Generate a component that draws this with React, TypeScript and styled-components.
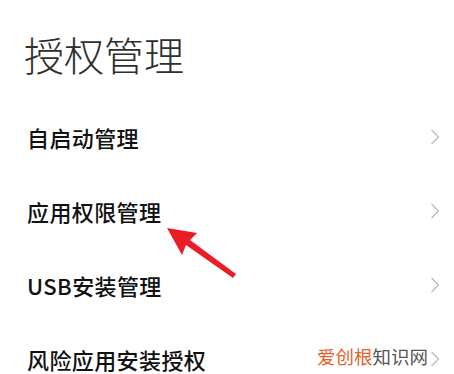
import React from "react";
import styled, { createGlobalStyle } from "styled-components";

const GlobalStyle = createGlobalStyle`
  html, body {
    margin: 0;
    padding: 0;
    background: #fff;
  }
  body {
    font-family: "Noto Sans CJK SC", "Noto Sans", sans-serif;
  }
`;

const Page = styled.div`
  position: relative;
  width: 454px;
  height: 374px;
  overflow: hidden;
  background: #fff;
`;

const Title = styled.h1`
  margin: 0;
  height: 100px;
  box-sizing: border-box;
  padding: 8px 0 0 24px;
  display: flex;
  align-items: center;
  font-size: 40px;
  font-weight: 300;
  color: #2e2e2e;
`;

const List = styled.div`
  display: flex;
  flex-direction: column;
`;

const Row = styled.div`
  height: 74px;
  display: flex;
  align-items: center;
  justify-content: space-between;
  padding: 0 14px 0 27px;
`;

const Label = styled.span`
  font-size: 22px;
  font-weight: 500;
  color: #111;
  letter-spacing: 0.4px;
`;

const Chevron = styled.svg`
  width: 10px;
  height: 16px;
  flex-shrink: 0;
`;

const Arrow = styled.svg`
  position: absolute;
  left: 160px;
  top: 220px;
  width: 80px;
  height: 62px;
`;

const Watermark = styled.div`
  position: absolute;
  right: 26px;
  bottom: 7px;
  padding-left: 2px;
  font-size: 18.5px;
  font-family: "Noto Sans CJK SC", sans-serif;
  color: #555;
  background: #fff;
  line-height: 22px;
`;

const Accent = styled.span`
  color: #e2622c;
`;

const items = ["自启动管理", "应用权限管理", "USB安装管理", "风险应用安装授权"];

const App: React.FC = () => {
  return (
    <Page>
      <GlobalStyle />
      <Title>授权管理</Title>
      <List>
        {items.map((item) => (
          <Row key={item}>
            <Label>{item}</Label>
            <Chevron viewBox="0 0 10 16">
              <polyline
                points="1.5,1 8.5,8 1.5,15"
                fill="none"
                stroke="#bdbdbd"
                strokeWidth="1.3"
              />
            </Chevron>
          </Row>
        ))}
      </List>
      <Arrow viewBox="0 0 80 62">
        {/* tip at (7,8), tail at (75,57) */}
        <polygon
          points="7,8 37,13 30,20 76,54 73,58 26,25 22,35"
          fill="#ea1c24"
        />
      </Arrow>
      <Watermark>
        <Accent>爱创根</Accent>知识网
      </Watermark>
    </Page>
  );
};

export default App;
